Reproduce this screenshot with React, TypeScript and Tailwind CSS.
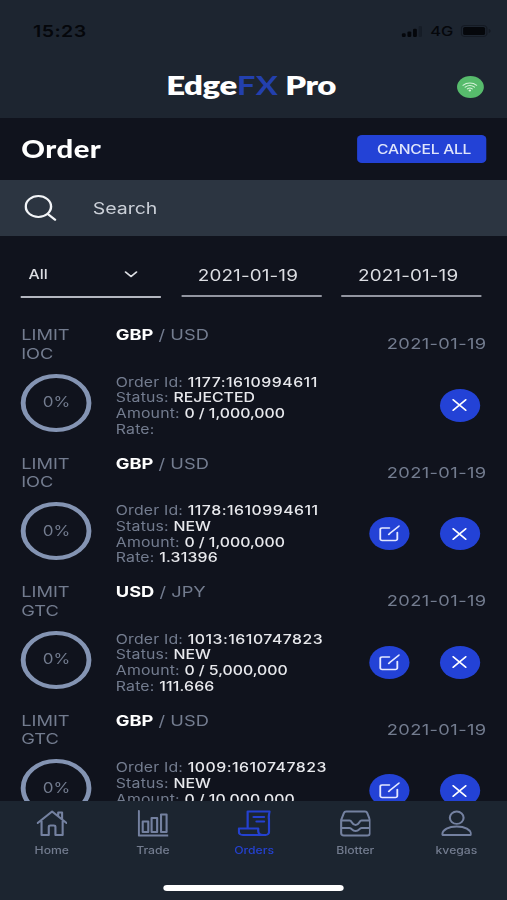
import type { ReactNode } from "react";

type Order = {
  id: string;
  base: string;
  quote: string;
  timeInForce: string;
  status: string;
  amount: string;
  rate: string;
  editable: boolean;
};

const orders: Order[] = [
  {
    id: "1177:1610994611",
    base: "GBP",
    quote: "USD",
    timeInForce: "IOC",
    status: "REJECTED",
    amount: "0 / 1,000,000",
    rate: "",
    editable: false,
  },
  {
    id: "1178:1610994611",
    base: "GBP",
    quote: "USD",
    timeInForce: "IOC",
    status: "NEW",
    amount: "0 / 1,000,000",
    rate: "1.31396",
    editable: true,
  },
  {
    id: "1013:1610747823",
    base: "USD",
    quote: "JPY",
    timeInForce: "GTC",
    status: "NEW",
    amount: "0 / 5,000,000",
    rate: "111.666",
    editable: true,
  },
  {
    id: "1009:1610747823",
    base: "GBP",
    quote: "USD",
    timeInForce: "GTC",
    status: "NEW",
    amount: "0 / 10,000,000",
    rate: "",
    editable: true,
  },
];

function StatusBar() {
  return (
    <div className="flex h-[62px] items-center justify-between pl-[27px] pr-[13px] text-[#05070b]">
      <span className="text-[16px] font-semibold tracking-[0.4px]">15:23</span>
      <div className="flex items-center">
        <svg width="18" height="11" viewBox="0 0 18 12" fill="currentColor">
          <rect x="0" y="8" width="3.4" height="4" rx="1.2" />
          <rect x="5" y="6" width="3.4" height="6" rx="1.2" />
          <rect x="10" y="3" width="3.4" height="9" rx="1.2" />
          <rect x="15" y="0" width="3" height="12" rx="1" opacity="0.25" />
        </svg>
        <span className="ml-[6.5px] text-[13.5px] font-medium">4G</span>
        <svg className="ml-[6px]" width="25" height="12" viewBox="0 0 25 12">
          <rect x="0.5" y="0.5" width="21" height="11" rx="3" fill="none" stroke="currentColor" opacity="0.35" />
          <rect x="2" y="2" width="18" height="8" rx="1.5" fill="currentColor" />
          <path d="M23 4v4c1-.3 1.6-1 1.6-2S24 4.3 23 4z" fill="currentColor" opacity="0.35" />
        </svg>
      </div>
    </div>
  );
}

function Header() {
  return (
    <header className="h-[118px] shrink-0 bg-[#1d2530]">
      <StatusBar />
      <div className="grid h-[50px] grid-cols-[1fr_auto_1fr] items-center">
        <span />
        <h1 className="whitespace-nowrap pb-[5px] pr-[4px] font-[Lato] text-[27px] font-extrabold leading-none tracking-[-0.35px] text-white">
          Edge<span className="font-bold tracking-[0.4px] text-[#2340ae]">FX</span>
          <span className="ml-[5.5px]">Pro</span>
        </h1>
        <div className="mr-[19.5px] flex size-[22px] items-center justify-center justify-self-end rounded-full bg-[#57bb6c]">
          <svg width="13" height="10" viewBox="0 0 14 11" fill="none" stroke="#d4f2d8" strokeWidth="1.1" strokeLinecap="round">
            <path d="M.8 3.6C4.4.4 9.6.4 13.2 3.6M2.8 5.7c2.5-2.1 5.9-2.1 8.4 0M4.8 7.6c1.300-1.100 3.100-1.100 4.400 0" />
            <circle cx="7" cy="9.3" r="0.6" fill="#d4f2d8" />
          </svg>
        </div>
      </div>
    </header>
  );
}

function Filters() {
  return (
    <div className="flex shrink-0 items-start gap-[16.5px] px-[17.4px] pt-[18px] text-[15.5px] text-[#dcdee3]">
      <div className="flex h-[43.5px] w-[115px] items-center justify-between border-b-2 border-[#b4b7c0] pl-[6px] pr-[19px]">
        <span className="text-[13px] font-medium">All</span>
        <svg width="11" height="7" viewBox="0 0 11 7" fill="none" stroke="currentColor" strokeWidth="1.6" strokeLinecap="round" strokeLinejoin="round">
          <path d="M1 1l4.5 4.5L10 1" />
        </svg>
      </div>
      {["from", "to"].map((field) => (
        <div
          key={field}
          className="flex h-[42.5px] w-[115px] items-center justify-center border-b-2 border-[#9295a0] pr-[6px] pt-[2px] tracking-[0.1px]"
        >
          2021-01-19
        </div>
      ))}
    </div>
  );
}

function RoundButton({ children }: { children: ReactNode }) {
  return (
    <button className="flex size-[33px] items-center justify-center rounded-full bg-[#2342d6]">
      {children}
    </button>
  );
}

function Detail({ label, children }: { label: string; children: ReactNode }) {
  return (
    <p className="whitespace-nowrap tracking-[0.15px] text-[#737c8f]">
      {label}: {children}
    </p>
  );
}

function OrderRow({ order }: { order: Order }) {
  return (
    <article className="flex h-[128.5px] shrink-0 text-[15px] leading-[18.5px] text-[#737c8f]">
      <div className="w-[77.6px]">
        <p>LIMIT</p>
        <p>{order.timeInForce}</p>
        <div className="mt-[10.5px] flex size-[58px] items-center justify-center rounded-full border-4 border-[#8494b3] text-[14px]">
          0%
        </div>
      </div>
      <div className="flex-1">
        <p>
          <b className="text-white">{order.base}</b> / {order.quote}
        </p>
        <div className="mt-[30px] text-[13px] leading-[15.8px]">
          <Detail label="Order Id">
            <span className="font-medium tracking-[0.4px] text-[#e8e9ed]">{order.id}</span>
          </Detail>
          <Detail label="Status">
            <span className="font-medium tracking-normal text-[#e8e9ed]">{order.status}</span>
          </Detail>
          <Detail label="Amount">
            <span className="font-medium tracking-[-0.03px] text-[#e8e9ed]">{order.amount}</span>
          </Detail>
          <Detail label="Rate">
            <span className="font-medium text-[#e8e9ed]">{order.rate}</span>
          </Detail>
        </div>
      </div>
      <div className="flex flex-col items-end pt-[9px]">
        <p className="tracking-[0.33px]">2021-01-19</p>
        <div className="mr-[5.5px] mt-[35px] flex gap-[24.5px]">
          {order.editable && (
            <RoundButton>
              <svg width="17" height="17" viewBox="0 0 17 17" fill="none" stroke="#e3e8ff" strokeWidth="1.5" strokeLinecap="round" strokeLinejoin="round">
                <path d="M8.5 3H2.5A1.500 1.500 0 0 0 1 4.500v9.500A1.500 1.500 0 0 0 2.500 15.500h11A1.500 1.500 0 0 0 15 14V7.500" />
                <path d="M8 9.5l1-1.3L16.5 1" />
              </svg>
            </RoundButton>
          )}
          <RoundButton>
            <svg width="12" height="12" viewBox="0 0 12 12" stroke="#fff" strokeWidth="1.6" strokeLinecap="round">
              <path d="M.8.8l10.4 10.4M11.2.8L.8 11.2" />
            </svg>
          </RoundButton>
        </div>
      </div>
    </article>
  );
}

const tabs = [
  {
    label: "Home",
    icon: (
      <path d="M1 13L14 1.500l13 11.500M4.500 11V25h6.500V17a1.500 1.500 0 0 1 1.500-1.500h3a1.500 1.500 0 0 1 1.500 1.500v8h6.500V11M19.500 5.500V2.500H23V9" />
    ),
  },
  {
    label: "Trade",
    icon: <path d="M1 1v24.500H28M4.500 11.500h5v10.500h-5zM12.500 8h5v14h-5zM21 4.500h5V22h-5z" />,
  },
  {
    label: "Orders",
    icon: (
      <path d="M8.500 17.500V1.500H27.500Q26 5 26.700 10V22a3 3 0 0 1-3 3H4.500Q1 25 1 21.500V18.500h16.500v2.500q0 4 4 4M13.500 7h9M16 11.500h6.500" />
    ),
  },
  {
    label: "Blotter",
    icon: (
      <path d="M5.500 1.500h17q1.500 0 2 1.500l2.500 7v13q0 2.500-2.500 2.500h-21Q1 25.500 1 23V10l2.500-7q.5-1.500 2-1.500zM1 10.500h7.500c2.500 0 2 4.500 5.500 4.500s3-4.500 5.500-4.500H27M1 18h7.500c2.500 0 2 3 5.500 3s3-3 5.500-3H27" />
    ),
  },
  {
    label: "kvegas",
    icon: (
      <path d="M14 1.500a6.200 6.200 0 1 1 0 12.400 6.200 6.200 0 0 1 0-12.400zM1 24c.5-4.500 5.500-7.500 13-7.500S26.500 19.500 27 24q0 1-1 1H2q-1 0-1-1z" />
    ),
  },
];

function TabBar() {
  return (
    <nav className="h-[99px] shrink-0 bg-[#1c2530]">
      <div className="grid grid-cols-5 pl-px pt-[9px]">
        {tabs.map((tab) => (
          <div
            key={tab.label}
            className={
              tab.label === "Orders"
                ? "flex flex-col items-center text-[#2441cf]"
                : "flex flex-col items-center text-[#7481a0]"
            }
          >
            <svg
              className={tab.label === "Orders" ? "w-[27px]" : "w-[25.5px]"}
              height="27"
              viewBox="0 0 28 27"
              preserveAspectRatio="none"
              fill="none"
              stroke="currentColor"
              strokeWidth="1.9"
              strokeLinejoin="round"
              strokeLinecap="round"
            >
              {tab.icon}
            </svg>
            <span
              className={
                tab.label === "Orders"
                  ? "mt-[6px] text-[10px] font-medium leading-[15px]"
                  : "mt-[6px] text-[10px] font-medium leading-[15px] text-[#737c8f]"
              }
            >
              {tab.label}
            </span>
          </div>
        ))}
      </div>
      <div className="mx-auto mt-[27px] h-[5.5px] w-[148px] rounded-full bg-white" />
    </nav>
  );
}

export default function App() {
  return (
    <div className="h-[900px] w-[507px] overflow-hidden bg-[#10131d]">
      {/* Wide aspect: the 416px layout is stretched over the full width */}
      <div className="flex h-[900px] w-[416px] origin-top-left scale-x-[1.21875] flex-col font-[Inter,sans-serif]">
        <Header />
        <div className="flex h-[62px] shrink-0 items-center justify-between px-[17px]">
          <h2 className="pl-[0.5px] font-[Lato] text-[24px] font-black leading-none tracking-[0.4px] text-white">Order</h2>
          <button className="h-[28.5px] w-[106px] rounded-[4px] bg-[#2342d6] pl-[4px] pt-px text-[12.8px] font-medium tracking-[-0.2px] text-[#dfe5fb]">
            CANCEL ALL
          </button>
        </div>
        <div className="flex h-[56px] shrink-0 items-center bg-[#2c3541] pl-[20px] text-[16px] text-[#cbd0d8]">
          <svg width="27" height="27" viewBox="0 0 27 27" fill="none" stroke="#f2f4f7" strokeWidth="2" strokeLinecap="round">
            <circle cx="11.5" cy="11.5" r="10.4" />
            <path d="M19.2 19l6 5.800" />
          </svg>
          <span className="ml-[29px]">Search</span>
        </div>
        <Filters />
        <main className="mt-[28.5px] flex min-h-0 flex-1 flex-col overflow-hidden pl-[17.4px] pr-[16.8px]">
          {orders.map((order) => (
            <OrderRow key={order.id} order={order} />
          ))}
        </main>
        <TabBar />
      </div>
    </div>
  );
}
